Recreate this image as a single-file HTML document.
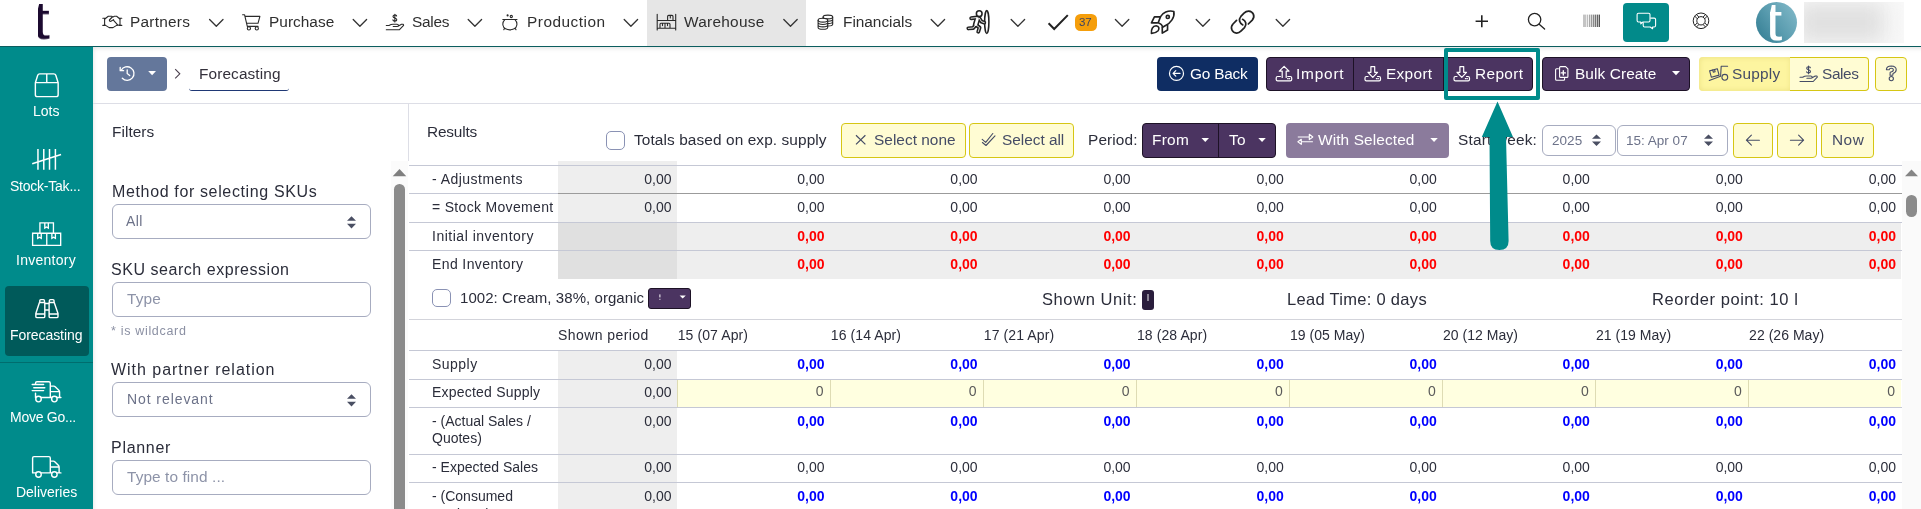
<!DOCTYPE html><html lang="en"><head>
<meta charset="utf-8">
<title>Forecasting</title>
<style>
*{box-sizing:border-box}
html,body{margin:0;padding:0}
body{width:1921px;height:509px;overflow:hidden;background:#fff;font-family:"Liberation Sans",sans-serif;color:#2b2d3a;position:relative}
.abs{position:absolute}
.t{position:absolute;white-space:pre;line-height:1;margin:0;will-change:transform}
svg{position:absolute;overflow:visible}
.i{fill:none;stroke:#2a2a2a;stroke-width:1.2;stroke-linecap:round;stroke-linejoin:round}
/* top nav */
#top{position:absolute;left:0;top:0;width:1921px;height:47px;background:#fff;border-bottom:1px solid #0b5d5f;z-index:5}
#top .nt{font-size:15.4px;color:#2f2f2f;top:13.9px}
.chev{fill:none;stroke:#333;stroke-width:1.3;stroke-linecap:round;stroke-linejoin:round}
#side{position:absolute;left:0;top:47px;width:93px;height:462px;background:#008b8b;z-index:4}
#side .lab{color:#fff;font-size:14px;text-align:center}
#side svg{fill:none;stroke:#fff;stroke-width:1.4;stroke-linecap:round;stroke-linejoin:round}
#main{position:absolute;left:0;top:0;width:1921px;height:509px}
#mshadow{position:absolute;left:93px;top:47px;width:1828px;height:462px;box-shadow:inset 3px 4px 5px -3px rgba(0,0,0,.13);pointer-events:none}
#grid{position:absolute;left:409px;top:161px;width:1493px;height:348px;overflow:hidden;font-size:14px;color:#2b2d3a;will-change:transform}
.row{position:absolute;left:0;width:1493px;border-top:1px solid #c5c8d5;line-height:27.3px}
.row .c{position:absolute;top:0;height:100%;white-space:nowrap}
.c.lab{left:0;width:149px;padding-left:23px}
.c.sh{left:149px;width:119px;text-align:right;padding-right:5.5px}
.c.v{text-align:right;padding-right:5.5px}
.row.dk{border-top-color:#9d9d9d}
.row.inv .v{background:#eee}
.row.inv .sh{background:#e0e0e0}
b.r{color:#f00}b.b{color:#00f}
.row.exp .v{background:#ffffe0;border-left:1px solid #dedcb4}
.row.exp .v:first-of-type{border-left:0}
.inp{color:#5a5a5a;font-size:14px;position:relative;top:-.5px;left:-1px}
.row.exp{line-height:25.6px}
.row.hd{line-height:31px}
.row.up{line-height:25.8px}
.row.two .lab{line-height:17.8px;padding-top:4.7px}
.fit{display:inline-block;white-space:pre}
.btn{position:absolute;height:34px;border-radius:4px}
.pur{background:#4b3461;border:1px solid #1d1226;color:#fff}
.yel{background:#fffcd3;border:1.2px solid #d6c614;color:#4a5068}
.bt{font-size:15.4px;color:#fff;top:10px}
.field{position:absolute;left:112px;width:259px;height:35px;border:1px solid #a7acc0;border-radius:6px;background:#fff}
.flabel{font-size:16px;color:#2b2d3a}
</style>
</head>
<body>
<nav id="top">
  <span class="t" id="logo" style="left:33px;top:-7px;font-size:56px;font-weight:400;color:#1c0a30;clip-path:inset(0 0 0 5.4px);transform:scale(1.12,.965);transform-origin:5.4px 11px">t</span>
  <div class="abs" style="left:647px;top:0;width:159px;height:46px;background:#e6e6e6"></div>
  <span class="t nt" style="left: 130.2px; letter-spacing: 0.24px;">Partners</span>
  <span class="t nt" style="left: 269.4px; letter-spacing: 0.03px;">Purchase</span>
  <span class="t nt" style="left: 412.2px; letter-spacing: -0.28px;">Sales</span>
  <span class="t nt" style="left: 527.2px; letter-spacing: 0.51px;">Production</span>
  <span class="t nt" style="left: 683.8px; letter-spacing: 0.26px;">Warehouse</span>
  <span class="t nt" style="left: 843.2px; letter-spacing: -0.02px;">Financials</span>
  <div class="abs" style="left:1075px;top:14px;width:22px;height:17px;border-radius:5.5px;background:#f59e0b"></div>
  <span class="t" style="left: 1079.4px; top: 17px; font-size: 11.5px; color: rgb(59, 66, 99); letter-spacing: -0.1px;">37</span>
  <div class="abs" style="left:1623px;top:3px;width:46px;height:39px;border-radius:4px;background:#028a8a"></div>
  <div class="abs" style="left:1756px;top:2px;width:41px;height:41px;border-radius:50%;background:linear-gradient(55deg,#2f7a90 0%,#5b9db0 50%,#86bccb 100%)"></div>
  <span class="t" id="avt" style="left:1765.8px;top:-5.6px;font-size:54px;color:#fff;clip-path:inset(0 0 0 4.4px);transform:scaleX(1.12);transform-origin:4.4px 0">t</span>
  <div class="abs" style="left:1804px;top:2px;width:100px;height:41px;overflow:hidden;background:#f8f8f8"><div class="abs" style="left:-6px;top:1px;width:86px;height:39px;background:#e0e0e0;filter:blur(10px)"></div></div>
  <svg width="1921" height="47" viewBox="0 0 1921 47" style="left:0;top:0">
    <g class="chev">
      <path d="M209.6 19.5l6.7 6.8 6.7-6.8"></path><path d="M353.2 19.5l6.7 6.8 6.7-6.8"></path><path d="M468.2 19.5l6.7 6.8 6.7-6.8"></path>
      <path d="M624.2 19.5l6.7 6.8 6.7-6.8"></path><path d="M783.8 19.5l6.7 6.8 6.7-6.8"></path><path d="M931.2 19.5l6.7 6.8 6.7-6.8"></path>
      <path d="M1011.2 19.5l6.7 6.8 6.7-6.8"></path><path d="M1115.4 19.5l6.7 6.8 6.7-6.8"></path><path d="M1196.2 19.5l6.7 6.8 6.7-6.8"></path>
      <path d="M1276.2 19.5l6.7 6.8 6.7-6.8"></path>
    </g>
    <g class="i" style="stroke-width:1.1">
      <!-- handshake -->
      <path d="M102.8 18.3H105.2M104.6 18.3V25.4M102.8 25.4H105.2M121.8 18.3H119.4M120 18.3V25.4M121.8 25.4H119.4"></path>
      <path d="M104.8 19L108.3 16.3H111.6L113 17L114.4 16.3H116.6L120 19M104.8 24.9L109.2 27.6H113L116.6 25.4L119.8 25M113.6 20.3L117.4 24.6M112.3 17L109.4 20Q109.3 21.7 110.9 21.3L113.6 19.6"></path>
      <!-- cart -->
      <path d="M242.6 14.8H244.6L247.3 26.4H258M245.3 16.4H259.9L258 23.3H246.9"></path>
      <circle cx="248.9" cy="28.4" r="1.6"></circle><circle cx="256.8" cy="28.4" r="1.6"></circle>
      <!-- sales hand -->
      <path d="M396.6 16C396.6 14.5 393 14.5 393 16.4C393 18.2 396.8 17.8 396.8 19.7C396.8 21.5 393 21.5 392.9 19.9M394.85 14.2V22"></path>
      <path d="M386.3 25.5H389Q391 24.2 393 24.2H397Q398.5 24.2 398.5 25.4Q398.5 26.5 397 26.5H393.2M398 26.3L401.5 24.3Q403.5 23.8 403.6 25.3L399.5 29.7H386.3"></path>
      <!-- cauldron -->
      <path d="M502.8 19.5H517M504.8 19.6C501.5 23 502.8 27.5 505.5 28.8C508 30 511.6 30 514.2 28.8C517 27.5 518.2 23 515 19.6M504.6 28.2L503.8 29.8M515.2 28.2L516 29.8"></path>
      <circle cx="507.6" cy="15.4" r=".5" fill="#2a2a2a"></circle><circle cx="511.3" cy="16.5" r="1.1"></circle>
      <!-- warehouse -->
      <path d="M657.2 14.2V29.9M675.7 14.2V29.9M657.2 20.5H675.7M657.2 28.3H675.7M667.6 20.5V16.4Q667.6 15.4 668.6 15.4H672Q673 15.4 673 16.4V20.5M670.3 15.4V18M660 28.3V24.3Q660 23.3 661 23.3H669Q670 23.3 670 24.3V28.3M665 23.3V28.3M662.5 23.3V25.6M667.5 23.3V25.6"></path>
      <!-- coins -->
      <ellipse cx="822.9" cy="20.2" rx="4.8" ry="1.9"></ellipse>
      <path d="M818.1 20.2V27.4A4.8 1.9 0 0 0 827.7 27.4V20.2M818.1 22.6A4.8 1.9 0 0 0 827.7 22.6M818.1 25A4.8 1.9 0 0 0 827.7 25"></path>
      <ellipse cx="827.9" cy="17" rx="4.8" ry="1.9"></ellipse>
      <path d="M823.1 17V18.3M832.7 17V24.2A4.8 1.9 0 0 1 828.3 26M832.7 19.4A4.8 1.9 0 0 1 828.3 21.2M832.7 21.8A4.8 1.9 0 0 1 828.3 23.6"></path>
    </g>
    <!-- runner -->
    <g transform="translate(958 2) scale(.0786)" fill="none" stroke-linecap="round" stroke-linejoin="round">
      <ellipse cx="366" cy="255" rx="27" ry="145" stroke="#222" stroke-width="20"></ellipse>
      <g stroke="#222" stroke-width="50">
        <path d="M242 198L168 206M272 206L298 250L334 262M222 292L196 330L132 336M238 298L274 326L258 378"></path>
        <path d="M248 212L226 288" stroke-width="74"></path>
      </g>
      <g stroke="#fff" stroke-width="11">
        <path d="M242 198L168 206M272 206L298 250L334 262M222 292L196 330L132 336M238 298L274 326L258 378"></path>
        <path d="M248 212L226 288" stroke-width="35"></path>
      </g>
      <circle cx="270" cy="148" r="36" fill="#fff" stroke="#222" stroke-width="20"></circle>
    </g>
    <!-- check -->
    <path d="M1048.6 23.3L1054.2 29L1067.8 15.1" fill="none" stroke="#222" stroke-width="2"></path>
    <!-- rocket -->
    <g transform="translate(1142 2) scale(.0786)" fill="none" stroke="#222" stroke-width="21" stroke-linecap="round" stroke-linejoin="round">
      <path d="M405 120C330 100 262 140 236 186L206 264C236 274 258 294 262 322L300 300C362 268 420 200 405 120Z"></path>
      <circle cx="328" cy="190" r="20"></circle>
      <path d="M228 190H158L120 265H196"></path>
      <path d="M258 322V396L325 356V292"></path>
      <path d="M120 400C115 350 135 305 180 302C215 305 225 340 205 365C180 392 150 398 120 400Z"></path>
    </g>
    <!-- link -->
    <g transform="translate(1222 2) scale(.0786)" fill="none" stroke="#222" stroke-width="22" stroke-linecap="round" stroke-linejoin="round">
      <path d="M335 280L385 230C425 185 400 120 340 115C312 114 296 126 280 142L240 184C205 225 225 270 265 292"></path>
      <path d="M185 235L140 280C100 325 125 390 185 395C212 396 228 384 244 368L286 326C320 285 302 240 262 220"></path>
    </g>
    <!-- plus -->
    <path d="M1481.8 15.2V27.2M1475.6 21.2H1488" fill="none" stroke="#222" stroke-width="1.6"></path>
    <!-- search -->
    <g class="i" style="stroke-width:1.3;stroke:#222"><circle cx="1534.6" cy="19.6" r="6.2"></circle><path d="M1539.2 24.2L1544.6 29"></path></g>
    <!-- barcode -->
    <g>
      <rect x="1583" y="14.6" width="3.2" height="12.4" fill="#c4c4c4"></rect><rect x="1586.8" y="14.6" width="1.4" height="12.4" fill="#bdbdbd"></rect>
      <rect x="1589" y="14.6" width="1.2" height="12.4" fill="#a8a8a8"></rect><rect x="1590.8" y="14.6" width="1.6" height="12.4" fill="#9a9a9a"></rect>
      <rect x="1593" y="14.6" width="1" height="12.4" fill="#8a8a8a"></rect><rect x="1594.6" y="14.6" width="1.6" height="12.4" fill="#777"></rect>
      <rect x="1596.8" y="14.6" width="1.2" height="12.4" fill="#666"></rect><rect x="1598.6" y="14.6" width="1.4" height="12.4" fill="#555"></rect>
    </g>
    <!-- chat -->
    <g fill="none" stroke="#fff" stroke-width="1.1" stroke-linejoin="round">
      <path d="M1638.5 13.2H1648.6Q1650 13.2 1650 14.6V20.6Q1650 22 1648.600 22H1643L1640.8 23.8V22H1638.5Q1637.100 22 1637.100 20.6V14.6Q1637.100 13.2 1638.5 13.2Z"></path>
      <path d="M1650.300 18.1H1654.200Q1655.600 18.100 1655.600 19.500V25.600Q1655.600 27 1654.200 27H1652.600V28.700L1650.200 27H1644.600Q1643.200 27 1643.200 25.600V22.300"></path>
    </g>
    <!-- lifebuoy -->
    <g fill="none" stroke="#222" stroke-width="1"><circle cx="1701" cy="20.8" r="7.8"></circle><circle cx="1701" cy="20.8" r="4.2"></circle>
      <path d="M1703.04 17.13L1705.64 14.53M1704.67 18.76L1707.27 16.16M1697.33 18.76L1694.73 16.16M1698.96 17.13L1696.36 14.53M1698.96 24.47L1696.36 27.07M1697.33 22.84L1694.73 25.44M1704.67 22.84L1707.27 25.44M1703.04 24.47L1705.64 27.07"></path></g>
  </svg>
</nav>
<aside id="side">
  <div class="abs" style="left:5px;top:239px;width:84px;height:69.6px;border-radius:4px;background:#005a5a"></div>
  <div class="abs" style="left:0;top:315px;width:93px;height:1px;background:#006d6e"></div>
  <span class="t lab" style="left: 33.2px; top: 57px; letter-spacing: -0.02px;">Lots</span>
  <span class="t lab" style="left: 9.8px; top: 132px; letter-spacing: -0.23px;">Stock-Tak...</span>
  <span class="t lab" style="left: 16.2px; top: 206px; letter-spacing: 0.27px;">Inventory</span>
  <span class="t lab" style="left: 10.4px; top: 281px; letter-spacing: -0.07px;">Forecasting</span>
  <span class="t lab" style="left: 10.2px; top: 363px; letter-spacing: -0.25px;">Move Go...</span>
  <span class="t lab" style="left: 15.7px; top: 438px; letter-spacing: -0.03px;">Deliveries</span>
  <svg width="93" height="462" viewBox="0 47 93 462" style="left:0;top:0">
    <g transform="translate(22 66) scale(.0786)" stroke-width="18">
      <path d="M170 212L200 118Q206 100 226 100H404Q424 100 430 118L460 212V365Q460 390 435 390H195Q170 390 170 365ZM170 212H460M315 100V212"></path>
    </g>
    <g transform="translate(22 140) scale(.0786)" stroke-width="19" style="stroke-linecap:butt">
      <path d="M203 115V378M277 115V378M350 115V378M425 115V378M130 302L497 184"></path>
    </g>
    <g transform="translate(22 214) scale(.0786)" stroke-width="17" style="stroke-linejoin:miter;stroke-linecap:butt">
      <path d="M228 245V112H400V245M135 245H492V400H135ZM315 245V400M290 112V180L312 166L335 180V112M200 245V310L222 296L245 310V245M380 245V310L402 296L425 310V245"></path>
    </g>
    <g transform="translate(22 290) scale(.0786)" stroke-width="18">
      <path d="M222 160L176 298V336Q176 352 192 352H274Q290 352 290 336V160ZM176 305H290M226 160V136Q226 122 240 122H272Q286 122 286 136V160M410 160L458 298V336Q458 352 442 352H361Q345 352 345 336V160ZM345 305H458M348 160V136Q348 122 362 122H394Q408 122 408 136V160M290 172H345M290 255H345"></path>
    </g>
    <g transform="translate(22 370) scale(.0786)" stroke-width="18">
      <path d="M172 182V168Q172 150 190 150H342Q360 150 360 168V350M172 295V350M130 185H275M150 225H290M130 262H275M360 205H405Q415 205 422 212L468 258Q478 268 478 280V350M364 275H476M172 350H495"></path>
      <circle cx="210" cy="370" r="35" fill="#008b8b"></circle><circle cx="412" cy="370" r="35" fill="#008b8b"></circle>
    </g>
    <g transform="translate(22 446) scale(.0786)" stroke-width="18">
      <path d="M135 340V153Q135 135 153 135H342Q360 135 360 153V340M360 192H400Q410 192 417 199L462 245Q472 255 472 267V340M364 268H472M135 342H495"></path>
      <circle cx="210" cy="362" r="35" fill="#008b8b"></circle><circle cx="412" cy="362" r="35" fill="#008b8b"></circle>
    </g>
  </svg>
</aside>
<main id="main">
  <div id="mshadow"></div>
  <!-- toolbar -->
  <div class="abs" style="left:93px;top:103px;width:1828px;height:1px;background:#dddee6"></div>
  <div class="btn" style="left:107px;top:57px;width:60px;background:#64779b"></div>
  <span class="t" style="left: 198.6px; top: 65.9px; font-size: 15.4px; color: rgb(51, 48, 59); letter-spacing: 0.11px;">Forecasting</span>
  <div class="abs" style="left:189px;top:83.3px;width:100px;height:7.5px;border-bottom:1.8px solid #1f3875;border-radius:0 0 3px 3px"></div>
  <div class="btn" style="left:1157px;top:57px;width:101px;background:#0f2d63"></div>
  <span class="t bt" style="left: 1189.8px; top: 65.95px; letter-spacing: -0.22px;">Go Back</span>
  <div class="btn pur" style="left:1266px;top:57px;width:267px"></div>
  <div class="abs" style="left:1353px;top:58px;width:1px;height:32px;background:#1d1226"></div>
  <div class="abs" style="left:1442.5px;top:58px;width:1px;height:32px;background:#1d1226"></div>
  <span class="t bt" style="left: 1295.6px; top: 65.95px; letter-spacing: 0.79px;">Import</span>
  <span class="t bt" style="left: 1386.2px; top: 65.95px; letter-spacing: 0.33px;">Export</span>
  <span class="t bt" style="left: 1474.8px; top: 65.95px; letter-spacing: 0.38px;">Report</span>
  <div class="btn pur" style="left:1542px;top:57px;width:148px"></div>
  <span class="t bt" style="left: 1574.8px; top: 65.95px; letter-spacing: 0.1px;">Bulk Create</span>
  <div class="btn" style="left:1699px;top:57px;width:92px;background:#fdf5a0;border-radius:4px 0 0 4px;box-shadow:inset 0 0 5px 1px #efe488"></div>
  <div class="btn yel" style="left:1790px;top:57px;width:79px;border-radius:0 4px 4px 0;border-left:0"></div>
  <div class="btn yel" style="left:1875px;top:57px;width:32px"></div>
  <span class="t" style="left: 1731.9px; top: 65.95px; font-size: 15.4px; color: rgb(69, 76, 102); letter-spacing: 0.22px;">Supply</span>
  <span class="t" style="left: 1821.7px; top: 65.95px; font-size: 15.4px; color: rgb(69, 76, 102); letter-spacing: -0.38px;">Sales</span>
  <div class="abs" style="left:1444px;top:48px;width:96.4px;height:52px;border:4.2px solid #008b8b;border-radius:2px;z-index:3"></div>
  <svg width="1828" height="57" viewBox="93 47 1828 57" style="left:93px;top:47px">
    <!-- history -->
    <g fill="none" stroke="#fff" stroke-width="1.3" stroke-linecap="round" stroke-linejoin="round">
      <path d="M121.200 70.300A6.800 6.800 0 1 1 122.300 78.300"></path>
      <path d="M120.200 67.300V70.700H123.600"></path>
      <path d="M127.200 69.800V73.600L129.700 75.500"></path>
    </g>
    <path d="M148.200 71H156L152.100 75.200Z" fill="#fff"></path>
    <path d="M175.200 69.200L179.800 73.800L175.200 78.400" fill="none" stroke="#4a3f4d" stroke-width="1.1"></path>
    <!-- go back icon -->
    <g fill="none" stroke="#fff" stroke-width="1.2" stroke-linecap="round" stroke-linejoin="round">
      <circle cx="1176.500" cy="73.400" r="7"></circle><path d="M1180 73.400H1173.200M1175.800 70.700L1173.100 73.400L1175.800 76.100"></path>
    </g>
    <!-- import -->
    <g fill="none" stroke="#fff" stroke-width="1.2" stroke-linejoin="round" stroke-linecap="round">
      <path d="M1280.400 76.500H1277.600Q1276.200 76.500 1276.200 77.900V79.400Q1276.200 80.800 1277.600 80.800H1290.300Q1291.700 80.800 1291.700 79.400V77.900Q1291.700 76.500 1290.300 76.500H1287.800"></path>
      <path d="M1282.200 77.400V71.200H1279.300L1284.100 66.300L1289 71.200H1286.200V77.400"></path>
      <path d="M1287.600 78.700H1288M1289.200 78.700H1289.600"></path>
    </g>
    <!-- export -->
    <g fill="none" stroke="#fff" stroke-width="1.2" stroke-linejoin="round" stroke-linecap="round">
      <path d="M1368 76.500H1366.400Q1365 76.500 1365 77.900V79.400Q1365 80.800 1366.400 80.800H1379.100Q1380.500 80.800 1380.500 79.400V77.900Q1380.500 76.500 1379.100 76.500H1377.500"></path>
      <path d="M1370.900 66.600H1374.700V72.300H1377.500L1372.800 77.300L1368 72.300H1370.900Z"></path>
      <path d="M1376.400 78.700H1376.800M1378 78.700H1378.400"></path>
    </g>
    <!-- report -->
    <g fill="none" stroke="#fff" stroke-width="1.2" stroke-linejoin="round" stroke-linecap="round">
      <path d="M1457 76.500H1455.400Q1454 76.500 1454 77.900V79.400Q1454 80.800 1455.400 80.800H1468.100Q1469.500 80.800 1469.500 79.400V77.900Q1469.500 76.500 1468.100 76.500H1466.500"></path>
      <path d="M1459.900 66.600H1463.700V72.300H1466.500L1461.800 77.300L1457 72.300H1459.900Z"></path>
      <path d="M1465.400 78.700H1465.800M1467 78.700H1467.400"></path>
    </g>
    <!-- bulk create -->
    <g fill="none" stroke="#fff" stroke-width="1.1" stroke-linejoin="round" stroke-linecap="round">
      <path d="M1560.600 66.600H1565.600L1567.900 68.900V76.400Q1567.900 77.400 1566.900 77.400H1560.600Q1559.600 77.400 1559.600 76.400V67.600Q1559.600 66.600 1560.600 66.600Z"></path>
      <path d="M1558.400 68.700H1556.600Q1555.600 68.700 1555.600 69.700V79.300Q1555.600 80.300 1556.600 80.300H1563.600Q1564.600 80.300 1564.600 79.300V78.400"></path>
      <path d="M1563.300 70.800V75M1561.200 72.900H1565.400" stroke-width="1.4"></path>
    </g>
    <path d="M1672 71H1680L1676 75.200Z" fill="#fff"></path>
    <!-- supply icon -->
    <g fill="none" stroke="#454c66" stroke-width="1.1" stroke-linejoin="round" stroke-linecap="round">
      <path d="M1727.600 66.300H1721.200L1720.600 76.200L1709.200 80.400"></path>
      <circle cx="1724.800" cy="77.300" r="2.900" fill="#fdf5a0"></circle>
      <path d="M1709.600 70.900L1717.300 68.700L1719.100 75.100L1711.400 77.300Z"></path>
      <path d="M1712.700 70L1713.300 72.200L1715.100 71.700L1714.500 69.500"></path>
    </g>
    <!-- sales icon -->
    <g fill="none" stroke="#454c66" stroke-width="1.1" stroke-linejoin="round" stroke-linecap="round" transform="translate(1413.7 51.8)">
      <path d="M396.600 16C396.600 14.500 393 14.500 393 16.400C393 18.200 396.800 17.800 396.800 19.700C396.800 21.500 393 21.500 392.900 19.900M394.850 14.200V22"></path>
      <path d="M386.300 25.500H389Q391 24.200 393 24.200H397Q398.500 24.200 398.500 25.400Q398.500 26.500 397 26.500H393.200M398 26.300L401.500 24.300Q403.500 23.800 403.600 25.300L399.500 29.700H386.300"></path>
    </g>
    <!-- help -->
    <g fill="none" stroke="#454c66" stroke-width="1.1" stroke-linejoin="round" stroke-linecap="round">
      <path d="M1886.400 69.600Q1886.600 66 1891.300 66Q1896.200 66.200 1896.200 69.700Q1896.200 72.300 1893 73.600L1892.800 75.300H1890L1890.200 72.200Q1893.400 71.600 1893.400 69.700Q1893.300 68.300 1891.300 68.300Q1889.300 68.300 1889.200 69.800Z"></path>
      <circle cx="1891.300" cy="78.600" r="2.100"></circle>
    </g>
  </svg>
  <!-- arrow annotation -->
  <svg width="60" height="160" viewBox="1470 95 60 160" style="left:1470px;top:95px;z-index:6">
    <path d="M1497.500 101.500L1513 137H1506L1508.600 241Q1508.600 250 1499.400 250Q1490.200 250 1490.200 241L1489.500 137H1481.800Z" fill="#008b8b"></path>
  </svg>
  <!-- filter panel -->
  <section id="filters">
    <span class="t" style="left: 111.6px; top: 124px; font-size: 15.4px; color: rgb(43, 45, 58); letter-spacing: 0.05px;">Filters</span>
    <div class="abs" style="left:408px;top:104px;width:1px;height:57px;background:#dddee6"></div>
    <span class="t flabel" style="left: 111.8px; top: 184.1px; letter-spacing: 0.64px;">Method for selecting SKUs</span>
    <div class="field" style="top:204px"></div>
    <span class="t" style="left: 126.4px; top: 214.2px; font-size: 14px; color: rgb(108, 114, 137); letter-spacing: 0.41px;">All</span>
    <span class="t flabel" style="left: 111.1px; top: 262.3px; letter-spacing: 0.54px;">SKU search expression</span>
    <div class="field" style="top:282px"></div>
    <span class="t" style="left: 126.6px; top: 291px; font-size: 15.4px; color: rgb(141, 147, 168); letter-spacing: 0.18px;">Type</span>
    <span class="t" style="left: 111.3px; top: 324.8px; font-size: 12.5px; color: rgb(139, 144, 163); letter-spacing: 0.68px;">* is wildcard</span>
    <span class="t flabel" style="left: 111.4px; top: 361.9px; letter-spacing: 0.97px;">With partner relation</span>
    <div class="field" style="top:382px"></div>
    <span class="t" style="left: 126.7px; top: 392.3px; font-size: 14px; color: rgb(108, 114, 137); letter-spacing: 0.92px;">Not relevant</span>
    <span class="t flabel" style="left: 111.4px; top: 440.3px; letter-spacing: 0.71px;">Planner</span>
    <div class="field" style="top:460px"></div>
    <span class="t" style="left: 126.7px; top: 469px; font-size: 15.4px; color: rgb(141, 147, 168); letter-spacing: 0.09px;">Type to find ...</span>
    <svg width="20" height="240" viewBox="340 204 20 240" style="left:340px;top:204px">
      <path d="M347 220.800H356L351.500 216.200ZM347 223.800H356L351.500 228.400Z" fill="#4a4f63"></path>
      <path d="M347 398.800H356L351.500 394.200ZM347 401.800H356L351.500 406.400Z" fill="#4a4f63"></path>
    </svg>
    <!-- scrollbar -->
    <div class="abs" style="left:391px;top:161px;width:17px;height:348px;background:#fbfbfb"></div>
    <svg width="17" height="20" viewBox="391 161 17 20" style="left:391px;top:161px"><path d="M392.700 176.200H406.300L399.500 169Z" fill="#7f7f7f"></path></svg>
    <div class="abs" style="left:394.300px;top:184px;width:10.800px;height:340px;border-radius:5.4px;background:#8b8b8b"></div>
  </section>
  <!-- results -->
  <section id="results">
    <span class="t" style="left: 427.3px; top: 124px; font-size: 15.4px; color: rgb(43, 45, 58); letter-spacing: -0.19px;">Results</span>
    <div class="abs" style="left:606px;top:131px;width:19px;height:19px;border:1px solid #8a92b4;border-radius:5px;background:#fff"></div>
    <span class="t" style="left: 634.2px; top: 131.8px; font-size: 15.4px; color: rgb(43, 45, 58); letter-spacing: 0.1px;">Totals based on exp. supply</span>
    <div class="btn yel" style="left:841px;top:123px;width:125px;height:35px"></div>
    <span class="t" style="left: 874.2px; top: 131.8px; font-size: 15.4px; color: rgb(69, 76, 102); letter-spacing: 0.03px;">Select none</span>
    <div class="btn yel" style="left:969px;top:123px;width:105px;height:35px"></div>
    <span class="t" style="left: 1001.7px; top: 131.8px; font-size: 15.4px; color: rgb(69, 76, 102); letter-spacing: -0.02px;">Select all</span>
    <span class="t" style="left: 1087.7px; top: 131.8px; font-size: 15.4px; color: rgb(43, 45, 58); letter-spacing: 0.12px;">Period:</span>
    <div class="btn pur" style="left:1142px;top:123px;width:134px;height:35px"></div>
    <div class="abs" style="left:1218px;top:124px;width:1px;height:33px;background:#1d1226"></div>
    <span class="t bt" style="left: 1152.2px; top: 131.8px; letter-spacing: 0.29px;">From</span>
    <span class="t bt" style="left: 1228.8px; top: 131.8px; letter-spacing: 0.41px;">To</span>
    <div class="btn" style="left:1286px;top:123px;width:163px;height:35px;background:#8b7b9c"></div>
    <span class="t bt" style="left: 1318.2px; top: 131.8px; letter-spacing: 0.12px;">With Selected</span>
    <span class="t" style="left: 1458.2px; top: 131.8px; font-size: 15.4px; color: rgb(43, 45, 58); letter-spacing: 0.19px;">Start week:</span>
    <div class="abs" style="left:1542px;top:125px;width:74px;height:31px;border:1px solid #a7acc0;border-radius:6px;background:#fff"></div>
    <span class="t" style="left: 1552px; top: 133.5px; font-size: 13.5px; color: rgb(108, 114, 137); letter-spacing: 0.05px;">2025</span>
    <div class="abs" style="left:1617px;top:125px;width:111px;height:31px;border:1px solid #a7acc0;border-radius:6px;background:#fff"></div>
    <span class="t" style="left: 1626.3px; top: 133.5px; font-size: 13.5px; color: rgb(108, 114, 137); letter-spacing: 0.01px;">15: Apr 07</span>
    <div class="btn yel" style="left:1733px;top:123px;width:40px;height:35px"></div>
    <div class="btn yel" style="left:1777px;top:123px;width:40px;height:35px"></div>
    <div class="btn yel" style="left:1821px;top:123px;width:53px;height:35px"></div>
    <span class="t" style="left: 1831.7px; top: 131.8px; font-size: 15.4px; color: rgb(69, 76, 102); letter-spacing: 0.49px;">Now</span>
    <svg width="1100" height="40" viewBox="840 120 1100 40" style="left:840px;top:120px">
      <path d="M856 135.200L865.400 144.400M865.400 135.200L856 144.400" fill="none" stroke="#454c66" stroke-width="1.200"></path>
      <path d="M982.200 139.400L985.700 142.400L992.800 133.500M982.400 142.500L986 145.500L995 135.900" fill="none" stroke="#454c66" stroke-width="1.100" stroke-linecap="round" stroke-linejoin="round"></path>
      <path d="M1201.500 138H1209L1205.250 142Z M1258.300 138H1265.800L1262.050 142Z M1430.300 138H1437.800L1434.050 142Z" fill="#fff"></path>
      <g fill="none" stroke="#fff" stroke-width="1.100" stroke-linejoin="round">
        <path d="M1297.800 137H1309.100M1309.300 134.300L1312.800 137L1309.300 139.600Z"></path>
        <path d="M1312.900 141.800H1301.400M1301.300 139.300L1297.900 141.800L1301.300 144.400Z"></path>
      </g>
      <path d="M1592 138.800H1601L1596.500 134.400ZM1592 141.600H1601L1596.500 146Z M1704 138.800H1713L1708.500 134.400ZM1704 141.600H1713L1708.500 146Z" fill="#4a4f63"></path>
      <path d="M1759.400 140.200H1746.400M1751.400 135.200L1746.400 140.200L1751.400 145.200" fill="none" stroke="#454c66" stroke-width="1.100" stroke-linecap="round" stroke-linejoin="round"></path>
      <path d="M1790.400 140.200H1803.600M1798.600 135.200L1803.600 140.200L1798.600 145.200" fill="none" stroke="#454c66" stroke-width="1.100" stroke-linecap="round" stroke-linejoin="round"></path>
    </svg>
    <div id="grid">
<div class="abs" style="left:149px;top:0;width:119px;height:117.5px;background:#eee"></div>
<div class="abs" style="left:149px;top:189.2px;width:119px;height:160px;background:#eee"></div>
<div class="row " style="top:-24.33px;height:28.33px"><div class="c lab"><span class="fit"></span></div><div class="c sh"></div><div class="c v" style="left:268.00px;width:153.06px"></div><div class="c v" style="left:421.06px;width:153.06px"></div><div class="c v" style="left:574.12px;width:153.06px"></div><div class="c v" style="left:727.18px;width:153.06px"></div><div class="c v" style="left:880.24px;width:153.06px"></div><div class="c v" style="left:1033.30px;width:153.06px"></div><div class="c v" style="left:1186.36px;width:153.06px"></div><div class="c v" style="left:1339.42px;width:153.06px"></div></div>
<div class="row " style="top:4.00px;height:28.33px"><div class="c lab"><span class="fit" style="letter-spacing: 0.47px;">- Adjustments</span></div><div class="c sh">0,00</div><div class="c v" style="left:268.00px;width:153.06px">0,00</div><div class="c v" style="left:421.06px;width:153.06px">0,00</div><div class="c v" style="left:574.12px;width:153.06px">0,00</div><div class="c v" style="left:727.18px;width:153.06px">0,00</div><div class="c v" style="left:880.24px;width:153.06px">0,00</div><div class="c v" style="left:1033.30px;width:153.06px">0,00</div><div class="c v" style="left:1186.36px;width:153.06px">0,00</div><div class="c v" style="left:1339.42px;width:153.06px">0,00</div></div>
<div class="row " style="top:32.33px;height:28.33px"><div class="c lab"><span class="fit" style="letter-spacing: 0.32px;">= Stock Movement</span></div><div class="c sh">0,00</div><div class="c v" style="left:268.00px;width:153.06px">0,00</div><div class="c v" style="left:421.06px;width:153.06px">0,00</div><div class="c v" style="left:574.12px;width:153.06px">0,00</div><div class="c v" style="left:727.18px;width:153.06px">0,00</div><div class="c v" style="left:880.24px;width:153.06px">0,00</div><div class="c v" style="left:1033.30px;width:153.06px">0,00</div><div class="c v" style="left:1186.36px;width:153.06px">0,00</div><div class="c v" style="left:1339.42px;width:153.06px">0,00</div><div class="abs" style="left:149px;top:-1px;width:1344px;height:1px;background:#9b9b9b"></div></div>
<div class="row inv" style="top:60.67px;height:28.33px"><div class="c lab"><span class="fit" style="letter-spacing: 0.51px;">Initial inventory</span></div><div class="c sh"></div><div class="c v" style="left:268.00px;width:153.06px"><b class="r">0,00</b></div><div class="c v" style="left:421.06px;width:153.06px"><b class="r">0,00</b></div><div class="c v" style="left:574.12px;width:153.06px"><b class="r">0,00</b></div><div class="c v" style="left:727.18px;width:153.06px"><b class="r">0,00</b></div><div class="c v" style="left:880.24px;width:153.06px"><b class="r">0,00</b></div><div class="c v" style="left:1033.30px;width:153.06px"><b class="r">0,00</b></div><div class="c v" style="left:1186.36px;width:153.06px"><b class="r">0,00</b></div><div class="c v" style="left:1339.42px;width:153.06px"><b class="r">0,00</b></div></div>
<div class="row inv" style="top:89.00px;height:28.80px"><div class="c lab"><span class="fit" style="letter-spacing: 0.39px;">End Inventory</span></div><div class="c sh"></div><div class="c v" style="left:268.00px;width:153.06px"><b class="r">0,00</b></div><div class="c v" style="left:421.06px;width:153.06px"><b class="r">0,00</b></div><div class="c v" style="left:574.12px;width:153.06px"><b class="r">0,00</b></div><div class="c v" style="left:727.18px;width:153.06px"><b class="r">0,00</b></div><div class="c v" style="left:880.24px;width:153.06px"><b class="r">0,00</b></div><div class="c v" style="left:1033.30px;width:153.06px"><b class="r">0,00</b></div><div class="c v" style="left:1186.36px;width:153.06px"><b class="r">0,00</b></div><div class="c v" style="left:1339.42px;width:153.06px"><b class="r">0,00</b></div></div>
<div class="abs" style="left:23.4px;top:128.4px;width:18.4px;height:18px;border:1px solid #8a92b4;border-radius:5px;background:#fff"></div>
<span class="t" style="left: 51.2px; top: 129.4px; font-size: 15px; color: rgb(43, 45, 58); letter-spacing: 0.06px;">1002: Cream, 38%, organic</span>
<div class="abs pur" style="left:239.2px;top:127.4px;width:42.8px;height:20.4px;border-radius:3px"></div>
<span class="t" style="left: 632.8px; top: 130px; font-size: 16.5px; color: rgb(43, 45, 58); letter-spacing: 0.59px;">Shown Unit:</span>
<div class="abs" style="left:733px;top:128.8px;width:12.4px;height:20px;border-radius:3px;background:#2a1d3c"></div>
<span class="t" style="left:737.6px;top:133px;font-size:9px;color:#fff">l</span>
<span class="t" style="left: 877.6px; top: 130px; font-size: 16.5px; color: rgb(43, 45, 58); letter-spacing: 0.3px;">Lead Time: 0 days</span>
<span class="t" style="left: 1243.3px; top: 130px; font-size: 16.5px; color: rgb(43, 45, 58); letter-spacing: 0.56px;">Reorder point: 10 l</span>
<svg width="50" height="24" viewBox="0 0 50 24" style="left:239.5px;top:126px"><path d="M30.600 8.500H36.800L33.700 11.600Z" fill="#fff"></path><path d="M10.900 7.400V10.400M10.900 11.800V12.800" stroke="#fff" stroke-width="1" fill="none"></path></svg>
<div class="row hd" style="top:158.00px;height:31.2px;border-top-color:#d3d4db"><div class="c lab"></div><div class="c sh" style="text-align:left;padding:0"><span class="fit" style="letter-spacing: 0.43px;">Shown period</span></div><div class="c v" style="left:268.70px;width:153.06px;text-align:left;padding:0"><span class="fit" style="letter-spacing: 0.1px;">15 (07 Apr)</span></div><div class="c v" style="left:421.76px;width:153.06px;text-align:left;padding:0"><span class="fit" style="letter-spacing: 0.1px;">16 (14 Apr)</span></div><div class="c v" style="left:574.82px;width:153.06px;text-align:left;padding:0"><span class="fit" style="letter-spacing: 0.1px;">17 (21 Apr)</span></div><div class="c v" style="left:727.88px;width:153.06px;text-align:left;padding:0"><span class="fit" style="letter-spacing: 0.1px;">18 (28 Apr)</span></div><div class="c v" style="left:880.94px;width:153.06px;text-align:left;padding:0"><span class="fit" style="letter-spacing: 0.03px;">19 (05 May)</span></div><div class="c v" style="left:1034.00px;width:153.06px;text-align:left;padding:0"><span class="fit" style="letter-spacing: 0.03px;">20 (12 May)</span></div><div class="c v" style="left:1187.06px;width:153.06px;text-align:left;padding:0"><span class="fit" style="letter-spacing: 0.03px;">21 (19 May)</span></div><div class="c v" style="left:1340.12px;width:153.06px;text-align:left;padding:0"><span class="fit" style="letter-spacing: 0.03px;">22 (26 May)</span></div></div>
<div class="row " style="top:189.20px;height:28.33px"><div class="c lab"><span class="fit" style="letter-spacing: 0.48px;">Supply</span></div><div class="c sh">0,00</div><div class="c v" style="left:268.00px;width:153.06px"><b class="b">0,00</b></div><div class="c v" style="left:421.06px;width:153.06px"><b class="b">0,00</b></div><div class="c v" style="left:574.12px;width:153.06px"><b class="b">0,00</b></div><div class="c v" style="left:727.18px;width:153.06px"><b class="b">0,00</b></div><div class="c v" style="left:880.24px;width:153.06px"><b class="b">0,00</b></div><div class="c v" style="left:1033.30px;width:153.06px"><b class="b">0,00</b></div><div class="c v" style="left:1186.36px;width:153.06px"><b class="b">0,00</b></div><div class="c v" style="left:1339.42px;width:153.06px"><b class="b">0,00</b></div></div>
<div class="row exp" style="top:217.53px;height:28.50px"><div class="c lab"><span class="fit" style="letter-spacing: 0.21px;">Expected Supply</span></div><div class="c sh">0,00</div><div class="c v" style="left:268.00px;width:153.06px"><span class="inp">0</span></div><div class="c v" style="left:421.06px;width:153.06px"><span class="inp">0</span></div><div class="c v" style="left:574.12px;width:153.06px"><span class="inp">0</span></div><div class="c v" style="left:727.18px;width:153.06px"><span class="inp">0</span></div><div class="c v" style="left:880.24px;width:153.06px"><span class="inp">0</span></div><div class="c v" style="left:1033.30px;width:153.06px"><span class="inp">0</span></div><div class="c v" style="left:1186.36px;width:153.06px"><span class="inp">0</span></div><div class="c v" style="left:1339.42px;width:153.06px"><span class="inp">0</span></div></div>
<div class="row two" style="top:246.00px;height:47.20px"><div class="c lab"><span class="fit">- (Actual Sales /<br>Quotes)</span></div><div class="c sh">0,00</div><div class="c v" style="left:268.00px;width:153.06px"><b class="b">0,00</b></div><div class="c v" style="left:421.06px;width:153.06px"><b class="b">0,00</b></div><div class="c v" style="left:574.12px;width:153.06px"><b class="b">0,00</b></div><div class="c v" style="left:727.18px;width:153.06px"><b class="b">0,00</b></div><div class="c v" style="left:880.24px;width:153.06px"><b class="b">0,00</b></div><div class="c v" style="left:1033.30px;width:153.06px"><b class="b">0,00</b></div><div class="c v" style="left:1186.36px;width:153.06px"><b class="b">0,00</b></div><div class="c v" style="left:1339.42px;width:153.06px"><b class="b">0,00</b></div></div>
<div class="row up" style="top:293.20px;height:27.90px"><div class="c lab"><span class="fit" style="letter-spacing: 0.01px;">- Expected Sales</span></div><div class="c sh">0,00</div><div class="c v" style="left:268.00px;width:153.06px">0,00</div><div class="c v" style="left:421.06px;width:153.06px">0,00</div><div class="c v" style="left:574.12px;width:153.06px">0,00</div><div class="c v" style="left:727.18px;width:153.06px">0,00</div><div class="c v" style="left:880.24px;width:153.06px">0,00</div><div class="c v" style="left:1033.30px;width:153.06px">0,00</div><div class="c v" style="left:1186.36px;width:153.06px">0,00</div><div class="c v" style="left:1339.42px;width:153.06px">0,00</div></div>
<div class="row two" style="top:321.10px;height:47.20px"><div class="c lab"><span class="fit">- (Consumed<br>products)</span></div><div class="c sh">0,00</div><div class="c v" style="left:268.00px;width:153.06px"><b class="b">0,00</b></div><div class="c v" style="left:421.06px;width:153.06px"><b class="b">0,00</b></div><div class="c v" style="left:574.12px;width:153.06px"><b class="b">0,00</b></div><div class="c v" style="left:727.18px;width:153.06px"><b class="b">0,00</b></div><div class="c v" style="left:880.24px;width:153.06px"><b class="b">0,00</b></div><div class="c v" style="left:1033.30px;width:153.06px"><b class="b">0,00</b></div><div class="c v" style="left:1186.36px;width:153.06px"><b class="b">0,00</b></div><div class="c v" style="left:1339.42px;width:153.06px"><b class="b">0,00</b></div></div>
    </div>
    <div class="abs" style="left:1902px;top:161px;width:19px;height:348px;background:#fafafa"></div>
    <svg width="19" height="20" viewBox="1902 161 19 20" style="left:1902px;top:161px"><path d="M1905 176.200H1918L1911.500 169.400Z" fill="#858585"></path></svg>
    <div class="abs" style="left:1906px;top:195px;width:10.800px;height:22px;border-radius:5.4px;background:#8b8b8b"></div>
  </section>
</main>


</body></html>
